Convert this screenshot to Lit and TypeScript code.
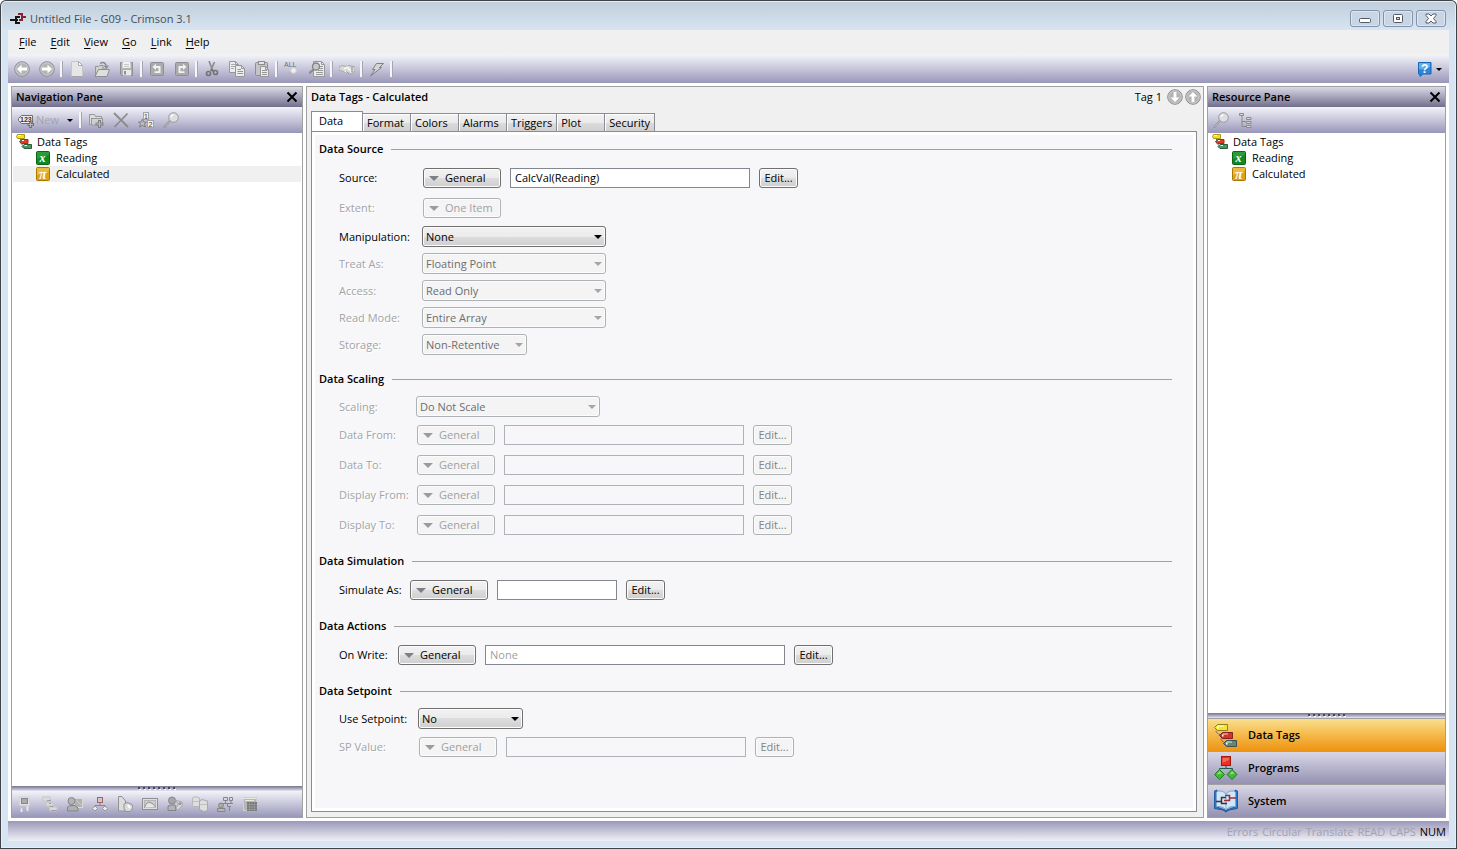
import { LitElement, html, css, svg, nothing, type TemplateResult, type SVGTemplateResult } from "lit";
import { customElement } from "lit/decorators.js";
import { classMap } from "lit/directives/class-map.js";
import { styleMap } from "lit/directives/style-map.js";

const arrow = (w: number, color: string) => html`<svg width=${w} height=${Math.floor(w / 2)} viewBox="0 0 10 5" preserveAspectRatio="none" aria-hidden="true"><path d="M0 0H10L5 5Z" fill=${color} /></svg>`;

const icon = (body: SVGTemplateResult, size = 16) =>
  html`<svg width=${size} height=${size} viewBox="0 0 ${size} ${size}" aria-hidden="true">${body}</svg>`;

const arrowPaths: Record<string, string> = {
  left: "M3 8L7.5 3.5V6.6H13V9.4H7.5V12.5Z",
  right: "M13 8L8.500 3.500V6.600H3V9.400H8.500V12.500Z",
  down: "M8 13L3.500 8.500H6.600V3H9.400V8.500H12.500Z",
  up: "M8 3L3.500 7.500H6.600V13H9.400V7.500H12.500Z",
};
const disc = (dir: string) => svg`<circle cx="8" cy="8" r="7.300" fill="#b4b4b6" stroke="#8e8e92"/><circle cx="8" cy="8" r="6.200" fill="none" stroke="#d4d4d6" stroke-width=".8"/><path d=${arrowPaths[dir]} fill="#fff"/>`;

const curl = (flip: boolean) => svg`<g transform=${flip ? "translate(16 0) scale(-1 1)" : ""}><rect x="1.500" y="1.500" width="13" height="13" rx="1" fill="#ababad" stroke="#8f8f92"/><path d="M3.500 6L7 2.800V5H11.500V12H5.500V10.300H9.500V7H7V9Z" fill="#f2f2f2"/></g>`;

const lens = svg`<path d="M1 15.500L7 9" stroke="#8b8b8b" stroke-width="2"/><path d="M1.500 15L7 9.200" stroke="#d9d9d9" stroke-width=".8"/><circle cx="10.500" cy="5.500" r="4.800" fill="#dedee2" stroke="#979797"/><path d="M8 5A2.500 2.500 0 0 1 10.500 2.800" fill="none" stroke="#fff" stroke-width="1.300"/>`;

const sheet = (x: number, y: number, w: number, h: number) => svg`<path d="M${x} ${y}h${w - 3}l3 3v${h - 3}h${-w}z" fill="#ececec" stroke="#979797"/><path d="M${x + w - 3} ${y}v3h3" fill="none" stroke="#979797"/>`;

const glyph: Record<string, SVGTemplateResult> = {
  back: disc("left"),
  forward: disc("right"),
  down: disc("down"),
  up: disc("up"),
  newFile: svg`<path d="M2.500.500H9.500L13.500 4.500V15.500H2.500Z" fill="#e6e6e6" stroke="#c6c6c8"/><path d="M9.500.500V4.500H13.500Z" fill="#fff" stroke="#aaa"/><path d="M2.500 15.500H13.500" stroke="#a5a5a8"/>`,
  open: svg`<path d="M1.500 14.500V5.500H4.500L5.500 4.500H9V8H13" fill="#d0d0d0" stroke="#949494"/><path d="M1 15.500L4.500 8.500H15.500L13 15.500Z" fill="#dedede" stroke="#8e8e8e"/><path d="M6 2.500C9 .500 11.500 2 12 4.500" fill="none" stroke="#8b8b8b" stroke-width="1.500"/><path d="M9.500 4.500H15L12.500 8Z" fill="#8b8b8b"/>`,
  save: svg`<path d="M1.500 1.500H13.500V14.500H2.500L1.500 13.500Z" fill="#b1b1b3" stroke="#8f8f91"/><rect x="3.500" y="1" width="8" height="6" fill="#f1f1f1"/><path d="M5 3.500H10M5 5.500H10" stroke="#c6c6c6"/><rect x="4" y="9" width="8" height="5.500" fill="#e9e9e9"/><rect x="5" y="10" width="2" height="3.500" fill="#8d8d8d"/>`,
  undo: curl(false),
  redo: curl(true),
  cut: svg`<path d="M5 0L8.500 9M10.500 1L6.500 10" stroke="#8a8a8c" stroke-width="1.600"/><circle cx="4.500" cy="12.500" r="2" fill="none" stroke="#747476" stroke-width="1.700"/><circle cx="11.500" cy="11.500" r="2" fill="none" stroke="#747476" stroke-width="1.700"/><path d="M7 9L10 10" stroke="#747476" stroke-width="2"/>`,
  copy: svg`${sheet(0.5, 0.5, 9, 11)}<path d="M2 3.500H6M2 5.500H7M2 7.500H5" stroke="#aaa"/>${sheet(6.5, 4.5, 9, 11)}<path d="M8.500 8.500H12M8.500 10.500H14M8.500 12.500H14" stroke="#969696"/>`,
  paste: svg`<rect x="1.500" y="1.500" width="12" height="13" rx="1" fill="#c5c5c7" stroke="#8d8d8f"/><rect x="4.500" y=".500" width="6" height="3" fill="#e6e6e6" stroke="#8d8d8f"/>${sheet(6.5, 5.5, 8, 10)}<path d="M8 9.500H13M8 11.500H13M8 13.500H13" stroke="#969696"/>`,
  all: svg`<text x="0" y="6" font-size="7" font-family="Liberation Sans, sans-serif" fill="#6f6f74">ALL</text><path d="M3 15L7.500 11" stroke="#b5b5b5" stroke-width="2"/><circle cx="9.500" cy="9.500" r="2.800" fill="#eee" stroke="#d0d0d2"/>`,
  findText: svg`${sheet(4.5, 0.5, 11, 15)}<path d="M11 5.500H14M10 7.500H14M9 9.500H14M7 11.500H14M7 13.500H14" stroke="#999"/><path d="M0 12.500L5 8" stroke="#8b8b8b" stroke-width="2.200"/><circle cx="7" cy="5.500" r="3.500" fill="#c9c9cc" stroke="#838385" stroke-width="1.300"/>`,
  hands: svg`<path d="M0 6L3 4.500L7 5.500L10 4.500L16 6V10L12.500 12.500L9 13L3.500 10L0 9.500Z" fill="#d9d9da" stroke="#aaaaab"/><path d="M5 8L8 6L12 10M6 10L9 12" fill="none" stroke="#fff" stroke-width="1.300"/><path d="M13 5.500V11M7 10.500L10 12.500" stroke="#8f8f91"/>`,
  bolt: svg`<path d="M7.500 2.500H14.500L10.500 6.500H12.500L1.500 15L6 8.500H3.500Z" fill="#d5d5d7" stroke="#808082"/>`,
  tagNew: svg`<path d="M3.500 3.500H14.500V11.500H3.500L.500 8.500V6.500Z" fill="#ededed" stroke="#6f6f72"/><text x="2" y="10.200" font-size="7" font-weight="700" font-family="Liberation Sans, sans-serif" fill="#333">123</text><path d="M12.500 9.500V16M9.500 12.500H16" stroke="#68686b" stroke-width="2.500"/><path d="M12.500 10.500V15M10.500 12.500H15" stroke="#ccc" stroke-width=".8"/>`,
  folderNew: svg`<path d="M1.500 12.500V2.500H6.500L7.500 4.500H13.500V6.500H4.500V12.500Z" fill="#dcdcde" stroke="#98989a"/><rect x="3.500" y="6.500" width="11" height="6.500" fill="#d0d0d2" stroke="#98989a"/><path d="M11.500 8V16M7.500 12H15.500" stroke="#808083" stroke-width="3"/><path d="M11.500 9V15M8.500 12H14.500" stroke="#bdbdc0"/>`,
  remove: svg`<path d="M1 1L15 15M14.500 1.500L1.500 15" stroke="#8b8b8e" stroke-width="1.800"/>`,
  sort: svg`<rect x="5.500" y=".500" width="5" height="7" fill="#efefef" stroke="#a4a4a6"/><text x="6" y="6.800" font-size="7" font-family="Liberation Sans, sans-serif" fill="#444">1</text><rect x="9.500" y="8.500" width="6" height="7" fill="#efefef" stroke="#a4a4a6"/><text x="10.500" y="14.800" font-size="7" font-family="Liberation Sans, sans-serif" fill="#444">2</text><path d="M4.500 7L5.800 10H8.500L6.500 12L7.500 15L4.500 13.500L1.500 15L2.500 12L.500 10H3.200Z" fill="#bbb" stroke="#808083"/>`,
  lens,
  treeView: svg`<path d="M4 4V14.500H8M4 9.500H8" fill="none" stroke="#8a8a8d"/><path d="M1.500 1.500H5.500V3.500H1.500ZM8.500 5.500H13V7.500H8.500ZM8.500 9.500H13V11.500H8.500ZM8.500 13.500H13V15.500H8.500Z" fill="#d6d6d8" stroke="#8a8a8d"/>`,
  comms: svg`<rect x="2.500" y="1" width="10" height="8.500" fill="#e1e1e1" stroke="#d3d3d3"/><rect x="4.500" y="2.500" width="6" height="5" fill="#aaabad" stroke="#868689"/><path d="M4.500 16V11M10.500 10V15.500" stroke="#e5e5e5" stroke-width="2"/><path d="M2.500 13L4.500 11L6.500 13M8.500 14L10.500 16L12.500 14" fill="none" stroke="#b5b5b5"/>`,
  tagsGrey: svg`<path d="M0 1H8V5H1ZM4 6.500H11V10H4ZM7 11H15V15H8Z" fill="#dadadb" stroke="#c5c5c7"/><path d="M5 4.500H9M7 7.500H9M8 10.500H11M9 14.500H15" stroke="#a0a0a2"/>`,
  webUser: svg`<rect x="7.500" y="2.500" width="8" height="9" fill="#b2b2b5" stroke="#dadadb"/><circle cx="4.500" cy="5" r="3.500" fill="#b4b4b6" stroke="#858588"/><path d="M.500 15V11L3 9.500H8L11 12V15Z" fill="#b0b0b2" stroke="#858588"/><path d="M9 4L14 9" stroke="#ccc"/>`,
  flow: svg`<path d="M8 6V9M3 12V9.500H13V12" fill="none" stroke="#87878a"/><rect x="5.500" y="1.500" width="5" height="5" fill="#c9c9ca" stroke="#a7625f"/><path d="M3 10L5.500 12.500L3 15L.500 12.500ZM13 10L15.500 12.500L13 15L10.500 12.500Z" fill="#ededee" stroke="#9a9a9c"/>`,
  log: svg`<path d="M1.500.500H5L8.500 5V15H1.500Z" fill="#dcdcdd" stroke="#939396"/><path d="M7 8L10 6.500L15 8.500L16 12L13 15.500H9L7 13Z" fill="#d9dadb" stroke="#939396"/><path d="M11 9L13 12" stroke="#fff" stroke-width="2"/>`,
  display: svg`<rect x=".500" y="2.500" width="15" height="11" fill="#dededf" stroke="#8f8f92"/><rect x="2.500" y="4.500" width="11" height="7" fill="#cdcdcf" stroke="#b5b5b8"/><path d="M2.500 11.500Q5 5 8 6.500Q11 7 13.500 11" fill="#e6e6e6" stroke="#8e8e91"/>`,
  security: svg`<circle cx="5" cy="4.500" r="3.500" fill="#a7a7aa" stroke="#858588"/><path d="M1 14.500V10L4 9H8L9 14.500Z" fill="#b4b4b6" stroke="#858588"/><path d="M8 4L15 6L15.500 9L11 14L9 12L12 8Z" fill="#dadadc" stroke="#a9a9ab"/><circle cx="13" cy="7.500" r="1.500" fill="#999"/>`,
  batch: svg`<path d="M.500 2L3 .500L7.500 2V10.500H.500Z" fill="#dededf" stroke="#b8b8ba"/><path d="M7.500 5L10 3.500L15.500 5V14.500L12 15.500L7.500 13.500Z" fill="#dededf" stroke="#a9a9ab"/><path d="M1 5.500H7M8 8.500H15" stroke="#bfbfc1"/>`,
  network: svg`<path d="M6.500 1.500H10.500V4.500H6.500ZM12.500 1.500H15.500V4.500H12.500ZM8.500 5V7.500H14V5M5 7.500H16M10.500 8V10.500H14M12.500 10.500V15" fill="none" stroke="#858588"/><circle cx="4" cy="9.500" r="2.500" fill="#aaa" stroke="#858588"/><path d="M.500 15.500V12.500H8V15.500Z" fill="#b7b7b9" stroke="#858588"/>`,
  device: svg`<rect x="1.500" y="1.500" width="13" height="13" fill="#b6b6b4" stroke="#ceceCA"/><path d="M1 2.500H14M3 4.500H12" stroke="#e8e8df"/><rect x="5" y="6" width="10" height="9" fill="#77777a"/><path d="M5 8.500H15M5 11H15M5 13.500H15M7.500 6V15M10 6V15M12.500 6V15" stroke="#9d9da0" stroke-width=".7"/>`,
  help: svg`<path d="M1.500 1.500H14V13H6L3 15.500V13H1.500Z" fill="#2f86d8" stroke="#1667b5"/><path d="M2 2H13V6Q8 9 2 8Z" fill="#64aeea"/><text x="4" y="11.500" font-size="12" font-weight="700" font-family="Liberation Sans, sans-serif" fill="#fff">?</text>`,
  tags: svg`<path d="M1.500.500H8.500V4.500H1.500L.500 2.500Z" fill="#f3e11d" stroke="#a8991a"/><path d="M5.500 5.500H12V9.500H5.500L3.500 7.500Z" fill="#e23b24" stroke="#97301f"/><path d="M8 10.500H15.500V14.500H8L6 12.500Z" fill="#449a5d" stroke="#2b5c3c"/><path d="M4.500 5V7M4 8.500L7 11.500" stroke="#666" fill="none"/><path d="M2 1.500H5M6 6.500H8M8.500 11.500H11" stroke="#fff"/>`,
  formula: svg`<rect x="1.500" y="1.500" width="13" height="13" rx="1" fill="#128a22" stroke="#0c6416"/><path d="M2 2H14V5L2 9Z" fill="#41b04d" opacity=".5"/><text x="4.500" y="12" font-size="12" font-weight="700" font-style="italic" font-family="Liberation Serif, serif" fill="#fff">x</text>`,
  pi: svg`<rect x="1.500" y="1.500" width="13" height="13" rx="1" fill="#dfa210" stroke="#ac7908"/><path d="M2 2H14V5L2 9Z" fill="#f2c54c" opacity=".7"/><text x="4" y="12.500" font-size="14" font-weight="700" font-style="italic" font-family="Liberation Serif, serif" fill="#fff">π</text>`,
};

const bigTags = svg`<path d="M3.500 1.500H13.500V7.500H3.500L.500 4.500Z" fill="#f5e62a" stroke="#8d7e28"/><path d="M8.500 9.500H18.500V15.500H8.500L5.500 12.500Z" fill="#d2322a" stroke="#7e241c"/><path d="M12.500 17.500H22.500V23.500H12.500L9.500 20.500Z" fill="#65857a" stroke="#3d5249"/><path d="M4 3H10M9 11H14M13 19H18" stroke="#fff" opacity=".8"/><path d="M3 4.500H4.500M8 12.500H9.500M12 20.500H13.500" stroke="#fff" stroke-width="2"/><path d="M2 7.500C2 10 4 11 6 11.500M7 15C7 18 9 19 10 19" fill="none" stroke="#777"/>`;
const bigFlow = svg`<path d="M12 9V13M5.500 16V12.500H18.500V16" fill="none" stroke="#1f5a4a"/><rect x="7.500" y=".500" width="9" height="9" fill="#ee2f1d" stroke="#a11a10"/><path d="M8.500 2H15V4L8.500 7Z" fill="#ff8b78" opacity=".6"/><path d="M5.500 13.500L10.500 18.500L5.500 23.500L.500 18.500ZM18 13.500L23 18.500L18 23.500L13 18.500Z" fill="#40bb35" stroke="#1f7c1c"/><path d="M5.500 15L8 17.500L3 18.500ZM18 15L20.500 17.500L15.500 18.500Z" fill="#8fe27e"/>`;
const bigBook = svg`<path d="M.500 2L3 1V18L12 21.500L21 18V1L23.500 2V19.500L15 21L12 23L9 21L.500 19.500Z" fill="#2d77c8" stroke="#205c9f"/><path d="M2.500 3Q7 0 12 5Q17 0 21.500 3V17.500Q16 16.500 12 20.500Q8 16.500 2.500 17.500Z" fill="#d3e6f8" stroke="#7ba8d6"/><path d="M12 5V20" stroke="#86b2dc"/><path d="M2 12.500H7.500M12 8.500H7.500V14.500H13" fill="none" stroke="#343434" stroke-width="1.500"/><path d="M10 11.500H15.500V6.500H11M15.500 9H22" fill="none" stroke="#9b3038" stroke-width="1.500"/>`;
const appMark = svg`<path d="M0 9H5M10 6H6V12H10M8 9H6" fill="none" stroke="#1b1414" stroke-width="2"/><path d="M8 3H12V9H9M12 6H16" fill="none" stroke="#8a2233" stroke-width="2"/>`;

interface Row {
  label: string;
  kind: "expr" | "picker" | "list";
  text: string;
  size?: string;
  value?: string;
  hint?: string;
  off?: boolean;
}
interface Section {
  title: string;
  labelWidth: number;
  rows: Row[];
}

const sections: Section[] = [
  {
    title: "Data Source",
    labelWidth: 73,
    rows: [
      { label: "Source:", kind: "expr", text: "General", value: "CalcVal(Reading)" },
      { label: "Extent:", kind: "picker", text: "One Item", off: true },
      { label: "Manipulation:", kind: "list", text: "None" },
      { label: "Treat As:", kind: "list", text: "Floating Point", off: true },
      { label: "Access:", kind: "list", text: "Read Only", off: true },
      { label: "Read Mode:", kind: "list", text: "Entire Array", off: true },
      { label: "Storage:", kind: "list", text: "Non-Retentive", size: "short", off: true },
    ],
  },
  {
    title: "Data Scaling",
    labelWidth: 67,
    rows: [
      { label: "Scaling:", kind: "list", text: "Do Not Scale", off: true },
      { label: "Data From:", kind: "expr", text: "General", off: true },
      { label: "Data To:", kind: "expr", text: "General", off: true },
      { label: "Display From:", kind: "expr", text: "General", off: true },
      { label: "Display To:", kind: "expr", text: "General", off: true },
    ],
  },
  { title: "Data Simulation", labelWidth: 60, rows: [{ label: "Simulate As:", kind: "expr", text: "General", size: "short" }] },
  { title: "Data Actions", labelWidth: 48, rows: [{ label: "On Write:", kind: "expr", text: "General", size: "long", hint: "None" }] },
  {
    title: "Data Setpoint",
    labelWidth: 69,
    rows: [
      { label: "Use Setpoint:", kind: "list", text: "No", size: "short" },
      { label: "SP Value:", kind: "expr", text: "General", off: true },
    ],
  },
];

const base = css`
  * { box-sizing: border-box; }
  button, input, select { font: inherit; color: inherit; margin: 0; }
  svg { display: block; flex: none; }
`;

@customElement("property-form")
export class PropertyForm extends LitElement {
  static styles = [
    base,
    css`
      :host { display: flex; flex-direction: column; gap: 13px; }
      .section { display: grid; gap: 6px; }
      .heading { display: flex; align-items: center; gap: 8px; margin: 0; height: 16px; font-size: 11px; font-weight: 600; }
      .heading::after { content: ""; flex: 1; height: 1px; background: #a0a0a0; }
      .rows { display: grid; column-gap: 10px; padding-left: 20px; }
      .name { display: flex; align-items: center; }
      .name.off { color: #a3a3a6; text-shadow: 1px 1px #fff; }
      .field { display: flex; align-items: center; gap: 9px; height: 30px; padding-left: 1px; }
      .field.list { height: 27px; padding-left: 0; }
      .btn {
        height: 20px; padding: 0 4px; border: 1px solid #707070; border-radius: 3px; color: #000;
        background: linear-gradient(#f2f2f2, #ebebeb 50%, #dddddd 50%, #cfcfcf);
        box-shadow: inset 0 0 0 1px #fcfcfc; display: flex; align-items: center; justify-content: center;
      }
      .edit { width: 39px; }
      .picker { width: 78px; gap: 6px; padding: 0 5px; justify-content: flex-start; }
      .btn:disabled, .combo select:disabled { border-color: #adb2b5; background: #f4f4f4; color: #a0a0a3; }
      .edit:disabled { color: #838383; }
      .text { width: 240px; height: 20px; padding: 0 4px 2px; border: 1px solid #828790; border-radius: 0; background: #fff; }
      .text.short { width: 120px; }
      .text.long { width: 300px; }
      .text:disabled { background: #f7f7f9; border-color: #afb2b8; }
      .text::placeholder { color: #a0a0a0; opacity: 1; }
      .combo { display: grid; width: 184px; align-items: center; }
      .combo.short { width: 105px; }
      .combo select {
        grid-area: 1 / 1; appearance: none; height: 21px; padding: 0 16px 0 3px; border: 1px solid #707070; border-radius: 3px; color: #000;
        background: linear-gradient(#f2f2f2, #ebebeb 50%, #dddddd 50%, #cfcfcf); box-shadow: inset 0 0 0 1px #fcfcfc;
      }
      .combo select:disabled { color: #6d6d6d; opacity: 1; }
      .combo svg { grid-area: 1 / 1; justify-self: end; margin-right: 4px; pointer-events: none; }
    `,
  ];

  private control(row: Row, id: string): TemplateResult {
    const off = !!row.off;
    const size = { short: row.size === "short", long: row.size === "long" };
    if (row.kind === "list") {
      return html`<div class="field list"><div class=${classMap({ combo: true, ...size })}>
        <select id=${id} ?disabled=${off}><option>${row.text}</option></select>${arrow(8, off ? "#a5a5a5" : "#000")}
      </div></div>`;
    }
    const picker = html`<button class="btn picker" id=${row.kind === "picker" ? id : nothing} ?disabled=${off}>${arrow(10, off ? "#9b9b9e" : "#7d7f88")}<span>${row.text}</span></button>`;
    if (row.kind === "picker") return html`<div class="field">${picker}</div>`;
    return html`<div class="field">${picker}
      <input class=${classMap({ text: true, ...size })} id=${id} type="text" .value=${row.value ?? ""} placeholder=${row.hint ?? nothing} ?disabled=${off}>
      <button class="btn edit" ?disabled=${off}>Edit...</button>
    </div>`;
  }

  render() {
    return sections.map((s, i) => html`<section class="section">
      <h3 class="heading">${s.title}</h3>
      <div class="rows" style=${styleMap({ gridTemplateColumns: `${s.labelWidth}px 1fr` })}>${s.rows.map((r, j) => html`
        <label class=${classMap({ name: true, off: !!r.off })} for="f${i}-${j}">${r.label}</label>${this.control(r, `f${i}-${j}`)}`)}
      </div>
    </section>`);
  }
}

@customElement("app-root")
export class AppRoot extends LitElement {
  static styles = [
    base,
    css`
      :host {
        display: flex; flex-direction: column; min-height: 100vh; padding: 0 8px 8px; box-sizing: border-box;
        font: 11px/16px "Open Sans", "Noto Sans", sans-serif; color: #000; white-space: nowrap;
        background: linear-gradient(#bfcddb, #d7e4f2 30px); border-radius: 6px 6px 0 0;
        box-shadow: inset 0 0 0 1px #3f4246, inset 0 0 0 2px #e6eef7;
      }
      button { font: inherit; background: none; border: 0; padding: 0; }
      .title { display: flex; align-items: center; height: 30px; padding: 7px 3px 0 2px; gap: 4px; color: #454d57; }
      .title h1 { flex: 1; margin: 0; font-size: 11px; font-weight: 400; }
      .wins { display: flex; gap: 3px; }
      .wins button { width: 30px; height: 17px; display: grid; place-items: center; border: 1px solid #8392ab; border-radius: 3px; box-shadow: inset 0 0 0 1px #dce7f2; background: #c7d5e4; }
      .menu { display: flex; gap: 14px; height: 25px; padding: 0 11px 2px; align-items: center; background: #f0f0f0; }
      .menu u { text-underline-offset: 2px; }
      .bar { display: flex; align-items: center; height: 28px; padding: 0 1px; background: linear-gradient(#f3f3fa, #c6c5da 50%, #9997b9); }
      .tool { width: 25px; height: 25px; display: grid; place-items: center; }
      .sep { width: 5px; height: 16px; display: flex; justify-content: center; }
      .sep::before { content: ""; width: 2px; background: #f5f5f5; border-right: 1px solid #a5a4b8; }
      .drop { display: flex; align-items: center; gap: 3px; margin: 0 6px 0 auto; }
      .body { flex: 1; display: grid; grid-template-columns: 292px minmax(0, 1fr) 239px; gap: 3px; padding: 3px; background: #fff; }
      .pane { display: flex; flex-direction: column; border: 1px solid #a0a0a0; background: #fff; }
      .cap { display: flex; align-items: center; justify-content: space-between; height: 20px; padding: 0 4px; background: linear-gradient(#d9d9e6, #716e8c); }
      .cap h2, .head h2 { margin: 0; font-size: 11px; font-weight: 600; }
      .pane .bar { height: 26px; padding: 0; }
      .new { display: flex; align-items: center; gap: 2px; padding: 0 3px 0 6px; color: #a3a3ae; }
      .new span { width: 29px; text-align: left; }
      .new + .sep { margin-left: 2px; }
      .tree { flex: 1; list-style: none; margin: 0; padding: 1px 1px 0; }
      .tree li { display: flex; align-items: center; gap: 5px; height: 16px; padding-left: 3px; }
      .tree .kid { padding-left: 22px; }
      .tree .on { background: #f0f0f0; }
      .split { height: 5px; background: linear-gradient(#77758f, #b4b2c9 60%, #e9e9f2); display: grid; place-items: center; }
      .cat { display: flex; align-items: center; gap: 10px; height: 33px; padding: 0 6px; font-weight: 600; border-top: 1px solid #a0a0a0; background: linear-gradient(#d9d7e6, #9491b2); }
      .cat.on { background: linear-gradient(#f9e08f, #f5b84a 50%, #ee9412); }
      .editor { display: flex; flex-direction: column; padding: 0 6px 5px 4px; border: 1px solid #a0a0a0; background: #f0f0f0; }
      .head { display: flex; align-items: center; gap: 2px; height: 20px; margin-right: -4px; }
      .head h2 { flex: 1; }
      .head span { margin-right: 3px; }
      .tabs { display: flex; align-items: flex-end; height: 25px; margin-bottom: -1px; }
      .tab { min-width: 48px; height: 19px; padding: 0 4px; text-align: left; border: 1px solid #898c95; border-left-width: 0; background: linear-gradient(#f2f2f2, #ebebeb 50%, #dddddd 50%, #cfcfcf); box-shadow: inset 1px 1px #fff; }
      .tab.on { width: 52px; height: 21px; padding: 0 7px 2px; border-left-width: 1px; border-bottom-color: #fff; background: #fff; }
      .page { flex: 1; padding: 3px; border: 1px solid #898c95; background: #fff; }
      .sheet { height: 100%; padding: 6px 21px 0 4px; background: #f7f7f9; }
      .status { display: flex; align-items: center; justify-content: flex-end; gap: 4px; height: 20px; padding: 2px 3px 0; color: #a2a2ad; background: linear-gradient(#9a98b8, #f0f0f7); }
      .status b { font-weight: 400; color: #000; }
    `,
  ];

  private tools(names: string[]) {
    return names.map((n) => (n === "|" ? html`<span class="sep"></span>` : html`<button class="tool" aria-label=${n}>${icon(glyph[n])}</button>`));
  }

  private closeMark() {
    return html`<button aria-label="Close pane"><svg width="12" height="12" viewBox="0 0 12 12"><path d="M1.500 1.500L10.500 10.500M10.500 1.500L1.500 10.500" stroke="#000" stroke-width="2" /></svg></button>`;
  }

  private grip() {
    return html`<svg width="38" height="3" viewBox="0 0 38 3"><path d="M0 1H38" stroke="#47465a" stroke-width="2" stroke-dasharray="2 3" /><path d="M1 2.500H38" stroke="#fff" stroke-dasharray="2 3" /></svg>`;
  }

  private tree(selected = "") {
    return html`<ul class="tree">
      <li>${icon(glyph.tags)}<span>Data Tags</span></li>
      <li class="kid">${icon(glyph.formula)}<span>Reading</span></li>
      <li class=${classMap({ kid: true, on: selected === "Calculated" })}>${icon(glyph.pi)}<span>Calculated</span></li>
    </ul>`;
  }

  render() {
    const tabs = ["Data", "Format", "Colors", "Alarms", "Triggers", "Plot", "Security"];
    const cats: [string, SVGTemplateResult][] = [["Data Tags", bigTags], ["Programs", bigFlow], ["System", bigBook]];
    return html`
      <header class="title">
        ${icon(appMark)}<h1>Untitled File - G09 - Crimson 3.1</h1>
        <div class="wins">
          <button aria-label="Minimize"><svg width="12" height="11" viewBox="0 0 12 11"><rect x=".5" y="5.500" width="11" height="4" rx="1" fill="#fff" stroke="#555a66" /></svg></button>
          <button aria-label="Restore"><svg width="12" height="11" viewBox="0 0 12 11"><rect x="1.500" y="1.500" width="9" height="8" rx="1" fill="#fff" stroke="#555a66" /><rect x="4.500" y="4.500" width="3" height="2" fill="#c7d5e4" stroke="#555a66" /></svg></button>
          <button aria-label="Close"><svg width="12" height="11" viewBox="0 0 12 11"><path d="M1 1H4L6 3L8 1H11V2.500L8.500 5.500L11 8.500V10H8L6 8L4 10H1V8.500L3.500 5.500L1 2.500Z" fill="#fff" stroke="#555a66" /></svg></button>
        </div>
      </header>
      <nav class="menu">${["File", "Edit", "View", "Go", "Link", "Help"].map((m) => html`<button><u>${m[0]}</u>${m.slice(1)}</button>`)}</nav>
      <div class="bar">
        ${this.tools(["back", "forward", "|", "newFile", "open", "save", "|", "undo", "redo", "|", "cut", "copy", "paste", "|", "all", "findText", "|", "hands", "|", "bolt", "|"])}
        <button class="drop" aria-label="Help">${icon(glyph.help)}${arrow(6, "#000")}</button>
      </div>
      <main class="body">
        <section class="pane">
          <div class="cap"><h2>Navigation Pane</h2>${this.closeMark()}</div>
          <div class="bar">
            <button class="new">${icon(glyph.tagNew)}<span>New</span>${arrow(6, "#000")}</button>
            ${this.tools(["|", "folderNew", "remove", "sort", "lens"])}
          </div>
          ${this.tree("Calculated")}
          <div class="split">${this.grip()}</div>
          <div class="bar">${this.tools(["comms", "tagsGrey", "webUser", "flow", "log", "display", "security", "batch", "network", "device"])}</div>
        </section>
        <section class="editor">
          <div class="head"><h2>Data Tags - Calculated</h2><span>Tag 1</span>
            <button aria-label="Next tag">${icon(glyph.down)}</button><button aria-label="Previous tag">${icon(glyph.up)}</button></div>
          <div class="tabs" role="tablist">${tabs.map((t, i) => html`<button role="tab" aria-selected=${i === 0 ? "true" : "false"} class=${classMap({ tab: true, on: i === 0 })}>${t}</button>`)}</div>
          <div class="page"><div class="sheet"><property-form></property-form></div></div>
        </section>
        <section class="pane">
          <div class="cap"><h2>Resource Pane</h2>${this.closeMark()}</div>
          <div class="bar">${this.tools(["lens", "treeView"])}</div>
          ${this.tree()}
          <div class="split">${this.grip()}</div>
          ${cats.map(([name, art], i) => html`<button class=${classMap({ cat: true, on: i === 0 })}>${icon(art, 24)}<span>${name}</span></button>`)}
        </section>
      </main>
      <footer class="status"><span>Errors</span><span>Circular</span><span>Translate</span><span>READ</span><span>CAPS</span><b>NUM</b></footer>
    `;
  }
}
